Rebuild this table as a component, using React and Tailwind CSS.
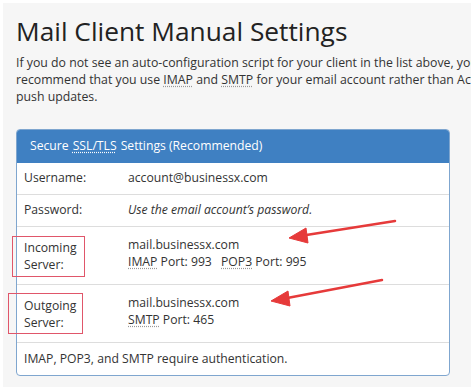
export default function App() {
  const abbr = 'underline decoration-dotted decoration-[#999] underline-offset-2';
  return (
    <div className="w-[474px] h-[392px] overflow-hidden bg-white p-[3px]" style={{ fontFamily: '"Open Sans", sans-serif' }}>
      <div className="h-[384px] bg-[#f6f6f6] pl-[13px] pt-[10px] overflow-hidden text-[#333]">
        <h1 className="text-[26.3px] leading-[36px] text-[#222] whitespace-nowrap">Mail Client Manual Settings</h1>
        <p className="mt-[5px] text-[12.3px] leading-[17px] whitespace-nowrap">
          If you do not see an auto-configuration script for your client in the list above, you can manually configure your mail client. We<br />
          recommend that you use <span className={abbr}>IMAP</span> and <span className={abbr}>SMTP</span> for your email account rather than ActiveSync, because it supports<br />
          push updates.
        </p>
        <div className="relative mt-[24px] w-[434px] rounded-[4px] border border-[#7fa6cf] bg-white text-[12.2px]">
          <div className="h-[33px] flex items-center px-[13px] bg-[#3f80c2] text-white rounded-t-[3px]">
            Secure <span className="mx-[4px] underline decoration-dotted underline-offset-2">SSL/TLS</span> Settings (Recommended)
          </div>
          <div className="flex h-[32px] items-center border-b border-[#ddd]">
            <div className="w-[111px] pl-[7px]">Username:</div>
            <div>account@businessx.com</div>
          </div>
          <div className="flex h-[32px] items-center border-b border-[#ddd]">
            <div className="w-[111px] pl-[7px]">Password:</div>
            <div className="italic">Use the email account’s password.</div>
          </div>
          <div className="flex h-[58px] items-center border-b border-[#ddd] leading-[17px]">
            <div className="w-[111px] pl-[7px]">Incoming<br />Server:</div>
            <div className="mb-[6px]">
              mail.businessx.com<br />
              <span className={abbr}>IMAP</span> Port: 993 <span className={`ml-[6px] ${abbr}`}>POP3</span> Port: 995
            </div>
          </div>
          <div className="flex h-[58px] items-center border-b border-[#ddd] leading-[17px]">
            <div className="w-[111px] pl-[7px]">Outgoing<br />Server:</div>
            <div className="mb-[6px]">
              mail.businessx.com<br />
              <span className={abbr}>SMTP</span> Port: 465
            </div>
          </div>
          <div className="flex h-[32px] items-center pl-[7px]">IMAP, POP3, and SMTP require authentication.</div>

          <div className="absolute left-[-5px] top-[106px] w-[73px] h-[41px] border border-[#e0566a]" />
          <div className="absolute left-[-9px] top-[163px] w-[75px] h-[41px] border border-[#e0566a]" />
          <svg className="absolute left-0 top-0 pointer-events-none" width="434" height="250" viewBox="0 0 434 250">
            <g transform="translate(-17,-131)" fill="#e63a3a" stroke="#e63a3a">
              <line x1="395" y1="222" x2="300" y2="237" strokeWidth="2.5" strokeLinecap="round" />
              <polygon points="289,239 306,229 308,244" strokeWidth="1" />
              <line x1="382" y1="281" x2="282" y2="300" strokeWidth="2.5" strokeLinecap="round" />
              <polygon points="271,302 288,292 290,307" strokeWidth="1" />
            </g>
          </svg>
        </div>
      </div>
    </div>
  );
}
